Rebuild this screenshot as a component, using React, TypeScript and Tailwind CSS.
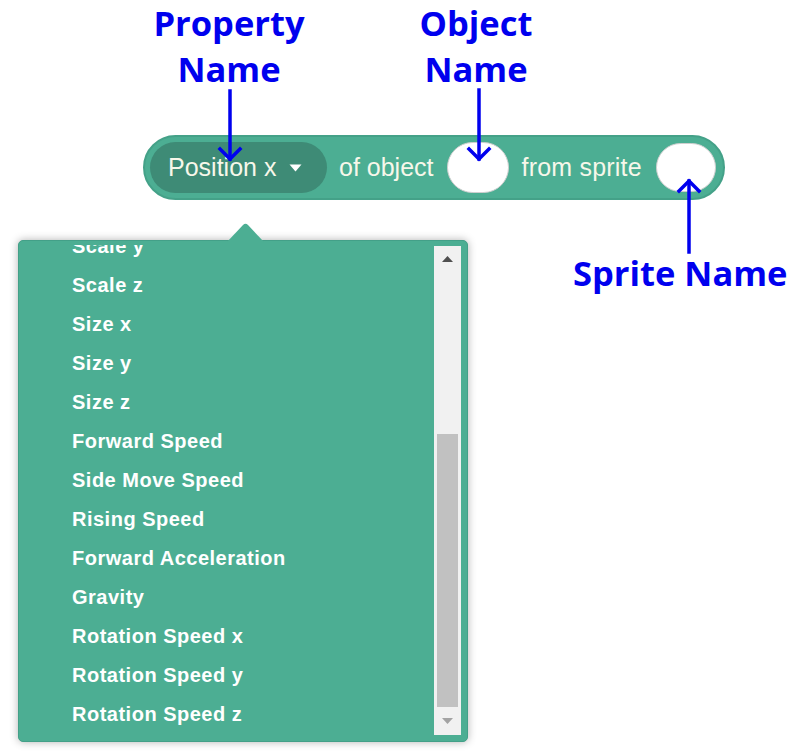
import React from 'react';

const items = [
  'Scale y',
  'Scale z',
  'Size x',
  'Size y',
  'Size z',
  'Forward Speed',
  'Side Move Speed',
  'Rising Speed',
  'Forward Acceleration',
  'Gravity',
  'Rotation Speed x',
  'Rotation Speed y',
  'Rotation Speed z',
];

const Label = ({ className, children }: { className: string; children: React.ReactNode }) => (
  <div
    className={`absolute text-center font-['Open_Sans',sans-serif] font-bold text-[34.5px] leading-[46px] text-[#0000ee] ${className}`}
  >
    {children}
  </div>
);

export default function App() {
  return (
    <div className="relative w-[794px] h-[751px] bg-white overflow-hidden font-['Liberation_Sans',Arial,sans-serif]">
      {/* the reporter block */}
      <div className="pt-[135px] pl-[143px]">
        <div className="flex items-center w-[582px] h-[65px] rounded-full bg-[#4cae93] border-2 border-[#44a188] pl-[5px] text-[25px] text-[#f7f7ea]">
          <div className="flex items-center h-[51px] w-[177px] rounded-full bg-[#3e8b76] pl-[18px]">
            <span>Position x</span>
            <svg className="ml-[13px]" width="13" height="8" viewBox="0 0 13 8">
              <path d="M0.5 0.5h12l-6 7z" fill="#ffffff" />
            </svg>
          </div>
          <span className="ml-[12px]">of object</span>
          <div className="ml-[13px] w-[62px] h-[51px] rounded-full bg-white border border-[#cfcfcf]" />
          <span className="ml-[13px] tracking-[0.2px]">from sprite</span>
          <div className="ml-[14px] w-[60px] h-[49px] rounded-full bg-white border border-[#cfcfcf]" />
        </div>
      </div>

      {/* dropdown menu */}
      <div className="relative ml-[18px] mt-[40px] w-[450px] h-[502px] rounded-[5px] bg-[#4cae93] border border-[#43a088] shadow-[0_0_8px_rgba(0,0,0,0.3)] flex">
        <svg className="absolute left-[208px] -top-[18px]" width="37" height="19" viewBox="0 0 37 19">
          <path d="M0 19 L16 2 Q18.5 -0.5 21 2 L37 19 Z" fill="#4cae93" />
        </svg>
        <div className="flex-1 mt-[4px] overflow-hidden">
          <div className="-mt-[19px] pl-[53px]">
            {items.map((it) => (
              <div key={it} className="h-[39px] flex items-center text-[20px] tracking-[0.5px] font-bold text-white">
                {it}
              </div>
            ))}
          </div>
        </div>
        <div className="mt-[5px] mb-[6px] mr-[6px] w-[27px] bg-[#f1f1f1] flex flex-col">
          <div className="h-[26px] flex items-center justify-center">
            <svg width="11" height="6" viewBox="0 0 11 6">
              <path d="M0 6h11L5.5 0z" fill="#505050" />
            </svg>
          </div>
          <div className="h-[162px]" />
          <div className="h-[273px] mx-[3px] bg-[#c1c1c1]" />
          <div className="flex-1 flex items-center justify-center">
            <svg width="11" height="6" viewBox="0 0 11 6">
              <path d="M0 0h11L5.5 6z" fill="#a3a3a3" />
            </svg>
          </div>
        </div>
      </div>

      {/* annotations */}
      <Label className="left-[129px] top-0 w-[200px]">
        Property
        <br />
        Name
      </Label>
      <Label className="left-[376px] top-0 w-[200px]">
        Object
        <br />
        Name
      </Label>
      <Label className="left-[573px] top-[250px] whitespace-nowrap text-left">Sprite Name</Label>

      <svg className="absolute inset-0 pointer-events-none" width="794" height="751" viewBox="0 0 794 751">
        <g stroke="#0000ee" strokeWidth="3.5" fill="none" strokeLinecap="square">
          <path d="M230 91V159" />
          <path d="M220 149L230 159L240 149" />
          <path d="M479 90V159" />
          <path d="M469 149L479 159L489 149" />
          <path d="M689 252V181" />
          <path d="M679 191L689 181L699 191" />
        </g>
      </svg>
    </div>
  );
}
